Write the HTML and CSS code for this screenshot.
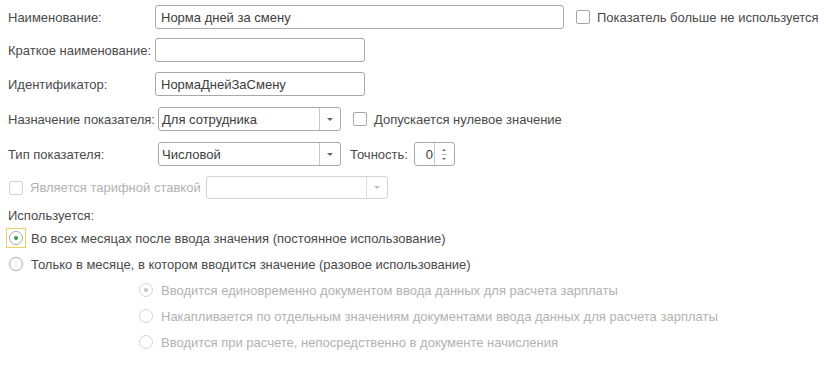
FILE: index.html
```html
<!DOCTYPE html>
<html lang="ru">
<head>
<meta charset="utf-8">
<link rel="stylesheet" href="styles.css">
</head>
<body>
<div class="form">
  <div class="row r1">
    <span class="lbl">Наименование:</span>
    <div class="input w-name">Норма дней за смену</div>
    <span class="check ml12"></span><span class="ctext">Показатель больше не используется</span>
  </div>
  <div class="row r2">
    <span class="lbl">Краткое наименование:</span>
    <div class="input w-short"></div>
  </div>
  <div class="row r3">
    <span class="lbl">Идентификатор:</span>
    <div class="input w-short">НормаДнейЗаСмену</div>
  </div>
  <div class="row r4">
    <span class="lbl">Назначение показателя:</span>
    <div class="select w-sel"><span class="val">Для сотрудника</span><span class="btn"><i class="tri"></i></span></div>
    <span class="check ml12"></span><span class="ctext">Допускается нулевое значение</span>
  </div>
  <div class="row r5">
    <span class="lbl">Тип показателя:</span>
    <div class="select w-sel"><span class="val">Числовой</span><span class="btn"><i class="tri"></i></span></div>
    <span class="plain ml9">Точность:</span>
    <div class="spin"><span class="num">0</span><span class="sbtn"><i class="up"></i><i class="sep"></i><i class="tri small"></i></span></div>
  </div>
  <div class="row r6 disabled">
    <span class="check dis ml1"></span><span class="ctext">Является тарифной ставкой</span>
    <div class="select dis w-tar"><span class="val"></span><span class="btn"><i class="tri"></i></span></div>
  </div>
  <div class="group-title">Используется:</div>
  <div class="radio-row sel">
    <span class="focus"><span class="radio on"></span></span>
    <span class="rtext">Во всех месяцах после ввода значения (постоянное использование)</span>
  </div>
  <div class="radio-row r2nd">
    <span class="radio"></span>
    <span class="rtext">Только в месяце, в котором вводится значение (разовое использование)</span>
  </div>
  <div class="sub disabled">
    <div class="radio-row"><span class="radio on dis"></span><span class="rtext">Вводится единовременно документом ввода данных для расчета зарплаты</span></div>
    <div class="radio-row"><span class="radio dis"></span><span class="rtext">Накапливается по отдельным значениям документами ввода данных для расчета зарплаты</span></div>
    <div class="radio-row"><span class="radio dis"></span><span class="rtext">Вводится при расчете, непосредственно в документе начисления</span></div>
  </div>
</div>
</body>
</html>
```

FILE: styles.css
```css
html, body {
  margin: 0;
  padding: 0;
  background: #ffffff;
}
body {
  font-family: "Liberation Sans", Arial, sans-serif;
  font-size: 13px;
  color: #4a4a4a;
}
.form {
  padding: 5px 0 0 8px;
}
.row {
  display: flex;
  align-items: center;
  height: 24px;
}
.r2 { margin-top: 9px; }
.r3 { margin-top: 10px; }
.r4 { margin-top: 11px; }
.r5 { margin-top: 11px; }
.r6 { margin-top: 10px; height: 23px; }
.lbl {
  width: 147px;
  flex: none;
  white-space: nowrap;
}
.r4 .lbl, .r5 .lbl { width: 150px; }
.input, .select, .spin {
  box-sizing: border-box;
  height: 24px;
  border: 1px solid #a8a8a8;
  border-radius: 3px;
  background: #fff;
  display: flex;
  align-items: center;
  color: #3c3c3c;
  flex: none;
}
.input { padding-left: 5px; }
.w-name { width: 409px; }
.w-short { width: 210px; }
.w-sel { width: 183px; }
.w-tar { width: 182px; height: 23px; margin-left: 5px; }
.select .val {
  flex: 1;
  padding-left: 3px;
}
.select .btn {
  width: 20px;
  height: 100%;
  border-left: 1px solid #c8c8c8;
  display: flex;
  align-items: center;
  justify-content: center;
}
.tri {
  display: block;
  width: 0;
  height: 0;
  border-left: 3px solid transparent;
  border-right: 3px solid transparent;
  border-top: 3px solid #666;
}
.up {
  display: block;
  width: 0;
  height: 0;
  border-left: 2px solid transparent;
  border-right: 2px solid transparent;
  border-bottom: 2px solid #666;
}
.tri.small {
  border-left-width: 2px;
  border-right-width: 2px;
  border-top-width: 2px;
}
.sep {
  display: block;
  width: 5px;
  height: 1px;
  background: #bbb;
  margin: 3px 0;
}
.check {
  box-sizing: border-box;
  width: 14px;
  height: 14px;
  border: 1px solid #a6a6a6;
  border-radius: 2px;
  background: #fff;
  flex: none;
}
.ml12 { margin-left: 12px; }
.ml9 { margin-left: 9px; }
.ml1 { margin-left: 1px; }
.ctext {
  margin-left: 7px;
  white-space: nowrap;
}
.plain { white-space: nowrap; }
.spin {
  width: 41px;
  margin-left: 6px;
}
.spin .num {
  width: 18px;
  text-align: right;
}
.spin .sbtn {
  margin-left: 1px;
  height: 100%;
  flex: 1;
  border-left: 1px solid #c8c8c8;
  display: flex;
  flex-direction: column;
  align-items: center;
  justify-content: center;
}
.disabled { color: #b2b2b2; }
.check.dis { border-color: #d4d4d4; }
.select.dis { border-color: #d4d4d4; }
.select.dis .btn { border-left-color: #dedede; }
.select.dis .tri { border-top-color: #bdbdbd; }
.group-title {
  margin-top: 8px;
  line-height: 17px;
}
.radio-row {
  display: flex;
  align-items: center;
  height: 20px;
  white-space: nowrap;
}
.radio-row.sel {
  margin-top: 4px;
  margin-left: -2px;
}
.radio-row.r2nd {
  margin-top: 6px;
  margin-left: 1px;
}
.focus {
  box-sizing: border-box;
  width: 20px;
  height: 20px;
  border: 1px solid #ecd063;
  display: flex;
  align-items: center;
  justify-content: center;
}
.radio {
  box-sizing: border-box;
  width: 14px;
  height: 14px;
  border: 1px solid #a8a8a8;
  border-radius: 50%;
  background: #fff;
  display: flex;
  align-items: center;
  justify-content: center;
  flex: none;
}
.radio.on::after {
  content: "";
  width: 4px;
  height: 4px;
  border-radius: 50%;
  background: #2f9b4f;
}
.radio.dis { border-color: #d6d6d6; }
.radio.on.dis::after { background: #c4c4c4; }
.sel .rtext { margin-left: 5px; }
.rtext { margin-left: 8px; }
.sub {
  margin-top: 6px;
  margin-left: 131px;
  display: flex;
  flex-direction: column;
  gap: 6px;
}
```
